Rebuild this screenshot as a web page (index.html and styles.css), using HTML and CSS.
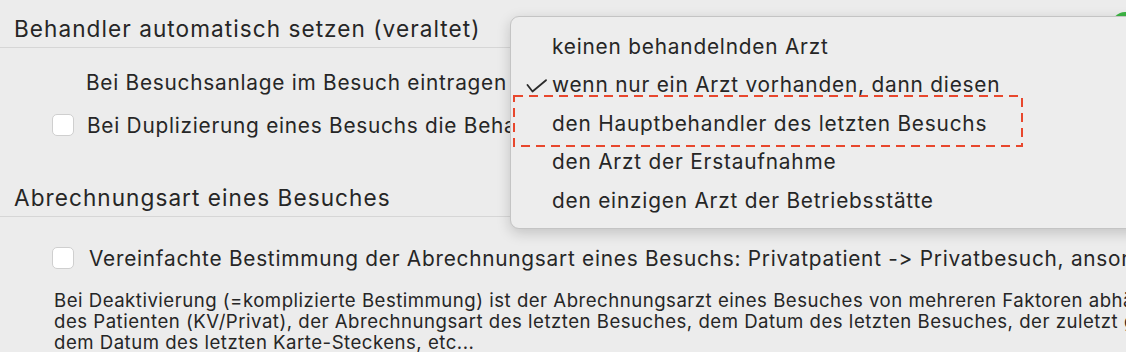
FILE: index.html
```html
<!DOCTYPE html>
<html lang="de">
<head>
    <meta charset="UTF-8">
    <meta name="viewport" content="width=device-width, initial-scale=1.0">
    <title>Einstellungen - Besuche</title>
    <link rel="stylesheet" href="styles.css">
</head>
<body>
    <div class="prefs">
        <section class="group">
            <h2 class="group-title">Behandler automatisch setzen (veraltet)</h2>
            <div class="row popup-row">
                <span class="row-label">Bei Besuchsanlage im Besuch eintragen</span>
            </div>
            <label class="row check-row">
                <span class="checkbox"></span>
                <span>Bei Duplizierung eines Besuchs die Behandler übernehmen</span>
            </label>
        </section>

        <section class="group billing">
            <h2 class="group-title">Abrechnungsart eines Besuches</h2>
            <label class="row check-row">
                <span class="checkbox"></span>
                <span>Vereinfachte Bestimmung der Abrechnungsart eines Besuchs: Privatpatient -&gt; Privatbesuch, ansonsten KV-Besuch</span>
            </label>
            <p class="note">Bei Deaktivierung (=komplizierte Bestimmung) ist der Abrechnungsarzt eines Besuches von mehreren Faktoren abhängig: dem Versicherungsstatus<br>des Patienten (KV/Privat), der Abrechnungsart des letzten Besuches, dem Datum des letzten Besuches, der zuletzt gesteckten Karte,<br>dem Datum des letzten Karte-Steckens, etc...</p>
        </section>
    </div>

    <span class="toggle"></span>

    <div class="menu">
        <div class="menu-item">keinen behandelnden Arzt</div>
        <div class="menu-item checked">
            <svg class="check" width="22" height="14" viewBox="0 0 22 14">
                <path d="M1.5 6 L6.5 12.5 L20 1.2" fill="none" stroke="#2b2b2b" stroke-width="1.8" stroke-linecap="round" stroke-linejoin="round"/>
            </svg>
            wenn nur ein Arzt vorhanden, dann diesen
        </div>
        <div class="menu-item">den Hauptbehandler des letzten Besuchs</div>
        <div class="menu-item">den Arzt der Erstaufnahme</div>
        <div class="menu-item">den einzigen Arzt der Betriebsstätte</div>
    </div>

    <svg class="highlight" width="510" height="52" viewBox="0 0 510 52">
        <rect x="1" y="1" width="508" height="50" fill="none" stroke="#e8472d" stroke-width="2" stroke-dasharray="9 6"/>
    </svg>
</body>
</html>
```

FILE: styles.css
```css
body {
    margin: 0;
    height: 100vh;
    overflow: hidden;
    position: relative;
    background: #ececec;
    color: #262626;
    font-family: Inter, "Liberation Sans", sans-serif;
}

.group-title {
    margin: 0;
    padding: 17px 14px 6px;
    font-size: 22.6px;
    font-weight: 400;
    line-height: 24px;
    letter-spacing: 1.05px;
    white-space: nowrap;
    border-bottom: 1px solid #d6d6d6;
}

.row {
    display: flex;
    align-items: center;
    height: 24px;
    font-size: 20.8px;
    letter-spacing: 0.75px;
    white-space: nowrap;
}

.popup-row {
    margin-top: 22px;
    padding-left: 86px;
}

.check-row {
    margin-top: 19px;
    padding-left: 52px;
    gap: 13px;
}

.checkbox {
    flex: none;
    width: 20px;
    height: 20px;
    background: #fff;
    border: 1px solid #cfcfcf;
    border-radius: 5px;
}

.billing {
    margin-top: 32px;
}

.billing .check-row {
    margin-top: 29px;
    gap: 15px;
}

.note {
    margin: 20px 0 0;
    padding-left: 54px;
    font-size: 18.6px;
    line-height: 21px;
    letter-spacing: 0.5px;
    white-space: nowrap;
}

.toggle {
    position: absolute;
    top: 12px;
    right: -30px;
    width: 44px;
    height: 26px;
    border-radius: 13px;
    background: #3db544;
}

.menu {
    position: absolute;
    left: 510px;
    top: 16px;
    width: 700px;
    height: 213px;
    box-sizing: border-box;
    padding: 11px 0 10px;
    background: #ededed;
    border: 1px solid #c4c4c4;
    border-radius: 9px;
    box-shadow: 0 4px 14px rgba(0, 0, 0, 0.18);
}

.menu-item {
    position: relative;
    height: 38.4px;
    line-height: 38.4px;
    padding-left: 41px;
    font-size: 20.8px;
    letter-spacing: 0.8px;
    white-space: nowrap;
}

.check {
    position: absolute;
    left: 15px;
    top: 13px;
}

.highlight {
    position: absolute;
    left: 513px;
    top: 95px;
}
```
